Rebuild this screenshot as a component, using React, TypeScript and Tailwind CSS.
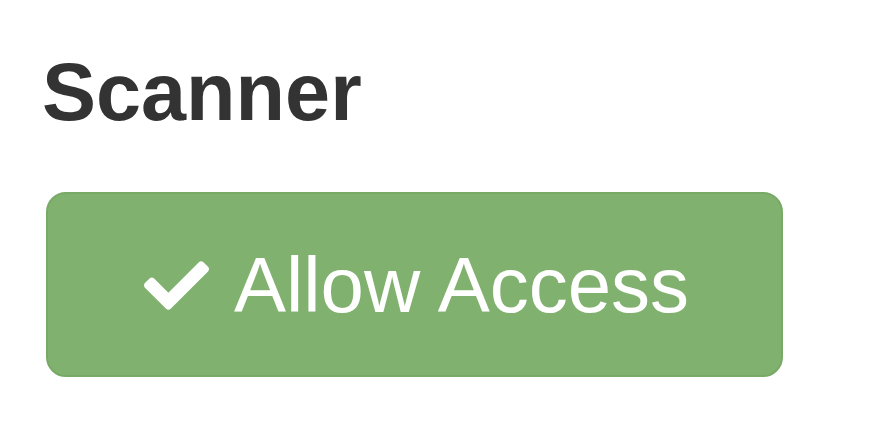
import { FaCheck } from 'react-icons/fa';

export default function App() {
  return (
    <div className="w-[882px] h-[446px] bg-white font-['Liberation_Sans',Arial,sans-serif] pt-[52px]">
      <h1 className="ml-[42px] text-[81px] leading-[80px] font-bold text-[#333333]">Scanner</h1>
      <button className="mt-[60px] ml-[46px] w-[737px] h-[185px] pl-[4px] rounded-[20px] bg-[#80b16e] border-2 border-[#78aa66] flex items-center justify-center gap-[25px] text-white">
        <FaCheck className="w-[65px] h-[65px] shrink-0 mt-[2px]" />
        <span className="text-[78px] leading-[78px]">Allow Access</span>
      </button>
    </div>
  );
}
